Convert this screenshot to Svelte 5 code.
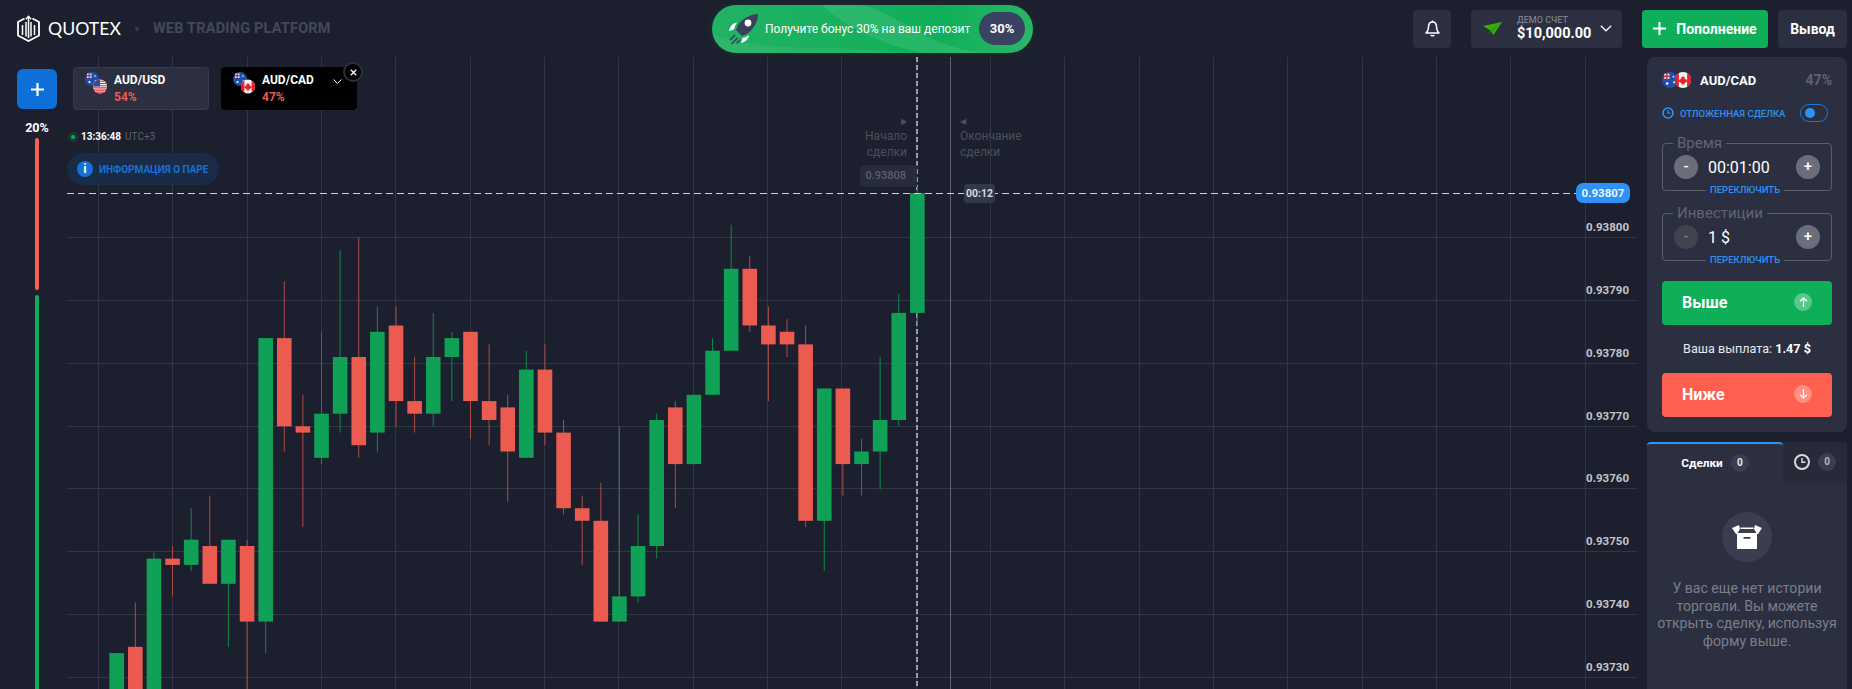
<script lang="ts">
  // [kind, high, top, bottom, low], in ticks below 0.93800 (one tick = 6.3px)
  const candles = [
    ['g', 66, 66, 80, 80], ['r', 58, 65, 80, 80], ['g', 50, 51, 80, 80], ['r', 49, 51, 52, 57],
    ['g', 43, 48, 52, 53], ['r', 41, 49, 55, 55], ['g', 48, 48, 55, 65], ['r', 48, 49, 61, 80],
    ['g', 16, 16, 61, 66], ['r', 7, 16, 30, 34], ['r', 25, 30, 31, 46], ['g', 15, 28, 35, 36],
    ['g', 2, 19, 28, 31], ['r', 0, 19, 33, 35], ['g', 11, 15, 31, 34], ['r', 11, 14, 26, 30],
    ['r', 19, 26, 28, 31], ['g', 12, 19, 28, 30], ['g', 15, 16, 19, 26], ['r', 15, 15, 26, 32],
    ['r', 17, 26, 29, 33], ['r', 25, 27, 34, 42], ['g', 18, 21, 35, 35], ['r', 17, 21, 31, 33],
    ['r', 29, 31, 43, 44], ['r', 41, 43, 45, 52], ['r', 39, 45, 61, 61], ['g', 30, 57, 61, 61],
    ['g', 44, 49, 57, 58], ['g', 28, 29, 49, 51], ['r', 26, 27, 36, 43], ['g', 25, 25, 36, 36],
    ['g', 16, 18, 25, 25], ['g', -2, 5, 18, 18], ['r', 3, 5, 14, 15], ['r', 11, 14, 17, 26],
    ['r', 13, 15, 17, 19], ['r', 14, 17, 45, 46], ['g', 24, 24, 45, 53], ['r', 24, 24, 36, 41],
    ['g', 32, 34, 36, 41], ['g', 19, 29, 34, 40], ['g', 9, 12, 29, 30], ['g', -8, -7, 12, 14]
  ];

  const tickY = (t) => 237.3 + t * 6.3;
  const candleX = (i) => 116.7 + i * 18.62;

  const gridX = Array.from({ length: 21 }, (_, i) => Math.round(98 + i * 74.33) + 0.5);
  const gridY = [237.5, 300.5, 363.5, 426.5, 488.5, 551.5, 614.5, 677.5];
  const axis = [
    ['0.93800', 226], ['0.93790', 289], ['0.93780', 352], ['0.93770', 415],
    ['0.93760', 477], ['0.93750', 540], ['0.93740', 603], ['0.93730', 666]
  ];
</script>

{#snippet flagAU(cx, cy, r)}
  <g transform="translate({cx - r} {cy - r}) scale({r / 7})">
    <circle cx="7" cy="7" r="7" fill="#1f4fa8" />
    <rect x="2" y="1.500" width="4.500" height="4.500" fill="#e8e8f0" />
    <path d="M4.200 1.500V6M2 3.700H6.500" stroke="#d8232f" stroke-width="1.300" />
    <circle cx="10" cy="4" r=".8" fill="#fff" />
    <circle cx="10.500" cy="9" r=".8" fill="#fff" />
    <circle cx="4.500" cy="10" r="1.100" fill="#fff" />
  </g>
{/snippet}

{#snippet flagUS(cx, cy, r)}
  <g transform="translate({cx - r} {cy - r}) scale({r / 7})">
    <circle cx="7" cy="7" r="7" fill="#f2f2f2" />
    <path d="M2.500 1.800h9M.9 4h12.200M.1 6.200h13.800M.2 8.400h13.600M1 10.600h12M3 12.600h8" stroke="#d8343f" stroke-width="1.100" />
    <path d="M7 0A7 7 0 0 0 0 7h7z" fill="#3a4a8c" />
  </g>
{/snippet}

{#snippet flagCA(cx, cy, r)}
  <g transform="translate({cx - r} {cy - r}) scale({r / 7})">
    <circle cx="7" cy="7" r="7" fill="#f4f4f4" />
    <path d="M3.400.9A7 7 0 0 0 3.400 13.100zM10.600.9a7 7 0 0 1 0 12.200z" fill="#e0252f" />
    <path d="M7 3.200l.9 1.600.9-.4-.4 2.200 1.100-.6.300.8 1-.1-.4 1.300.4.300-2.600 1.500.2.900H7.300v1.200h-.6V10.700H5.600l.2-.9-2.600-1.500.4-.3-.4-1.300 1 .1.300-.8 1.100.6-.4-2.200.9.4z" fill="#e0252f" />
  </g>
{/snippet}

<div class="page">
  <header class="topbar">
    <div class="brand">
      <svg class="logo" width="23" height="27" viewBox="0 0 23 27" fill="none" stroke="#fff">
        <path d="M7.500 3.500L1 7v13.500L11.500 26 22 20.500V7l-6.500-3.500" stroke-width="1.800" />
        <path d="M5.500 10v10M9 7v14.500M14 7v14.500M17.500 10v10M11.500 2v21" stroke-width="1.500" />
        <path d="M8.800 4.300l2.700-3 2.700 3" stroke-width="1.300" />
      </svg>
      <span class="wordmark">QUOTEX</span>
      <span class="brand-dot"></span>
      <span class="tagline">WEB TRADING PLATFORM</span>
    </div>

    <div class="bonus">
      <svg class="bonus-wave" viewBox="0 0 321 48" preserveAspectRatio="none">
        <path d="M150 0c40 10 60 40 120 48h-60C170 40 130 20 110 0z" fill="#fff" opacity=".09" />
        <path d="M0 30c60 20 130 8 190 18H0z" fill="#fff" opacity=".06" />
      </svg>
      <svg class="rocket" width="32" height="32" viewBox="0 0 32 32">
        <path d="M31 1C24 1 16 5 11 12l-2 5 6 6 5-2c7-5 11-13 11-20z" fill="#3a3f5e" />
        <circle cx="21" cy="10" r="3.400" fill="#fff" />
        <path d="M10 9.500C6 10 3 13 2 18l5-1.500C7.500 14 8.500 12 10 9.500zM22 22c-.5 4-3.500 7-8 8l1.500-5c2.500-.5 4.500-1.500 6.500-3z" fill="#fff" />
        <path d="M8 22l-5 5M10.500 25l-6 6M13 27l-3.500 3.500" stroke="#3a3f5e" stroke-width="1.500" />
      </svg>
      <span class="bonus-text">Получите бонус 30% на ваш депозит</span>
      <span class="bonus-badge">30%</span>
    </div>

    <div class="actions">
      <button class="square" aria-label="notifications">
        <svg width="15" height="17" viewBox="0 0 15 17" fill="none" stroke="#fff" stroke-width="1.500">
          <path d="M7.500 2C4.500 2 3.500 4.500 3.500 7c0 3-1 4.500-2.500 6h13c-1.500-1.500-2.500-3-2.500-6 0-2.500-1-5-4-5z" stroke-linejoin="round" />
          <path d="M5.800 15c.4 1 3 1 3.400 0M7.500 .6v1.400" />
        </svg>
      </button>
      <div class="account">
        <svg width="20" height="14" viewBox="0 0 20 14">
          <path d="M0 4L19 0 10.500 13 7.500 8.500z" fill="#2fb10a" />
          <path d="M7.500 8.500L19 0 5 12.500z" fill="#249008" />
        </svg>
        <div class="account-text">
          <span class="account-label">ДЕМО СЧЕТ</span>
          <span class="account-sum">$10,000.00</span>
        </div>
        <svg class="chevron" width="12" height="7" viewBox="0 0 12 7" fill="none" stroke="#fff" stroke-width="1.200"><path d="M.8.8L6 5.800 11.200.8" /></svg>
      </div>
      <button class="deposit">
        <svg width="13" height="13" viewBox="0 0 13 13" stroke="#fff" stroke-width="2"><path d="M6.500 0v13M0 6.500h13" /></svg>
        Пополнение
      </button>
      <button class="withdraw">Вывод</button>
    </div>
  </header>

  <div class="main">
    <aside class="rail">
      <button class="add" aria-label="add pair">
        <svg width="13" height="13" viewBox="0 0 13 13" stroke="#fff" stroke-width="2.200"><path d="M6.500 0v13M0 6.500h13" /></svg>
      </button>
      <span class="rail-pct">20%</span>
      <div class="rail-red"></div>
      <div class="rail-green"></div>
    </aside>

    <section class="chart">
      <svg class="plot" viewBox="67 57 1575 632" width="1575" height="632">
        {#each gridX as x}
          <line x1={x} x2={x} y1="57" y2="689" stroke="#323544" />
        {/each}
        {#each gridY as y}
          <line x1="67" x2="1637" y1={y} y2={y} stroke="#323544" />
        {/each}
        <line x1="950.5" x2="950.5" y1="57" y2="689" stroke="#62646f" />
        <line x1="917" x2="917" y1="57" y2="689" stroke="#9a9ca6" stroke-width="2" stroke-dasharray="5 3" />
        {#each candles as [kind, high, top, bottom, low], i}
          <line
            x1={candleX(i)}
            x2={candleX(i)}
            y1={tickY(high)}
            y2={tickY(low)}
            stroke={kind === 'g' ? '#0d8a4a' : '#b04c47'}
          />
          <rect
            x={candleX(i) - 7.3}
            y={tickY(top)}
            width="14.600"
            height={tickY(bottom) - tickY(top)}
            fill={kind === 'g' ? '#0fa155' : '#ec5b4f'}
          />
        {/each}
        <line x1="67" x2="1576" y1="193.500" y2="193.500" stroke="#d0d1d6" stroke-dasharray="7 4" />
      </svg>

      <div class="pairs">
        <div class="pair">
          <svg class="pair-flags" width="24" height="24" viewBox="0 0 24 24">
            {@render flagAU(8, 7, 7)}
            {@render flagUS(16, 14.500, 7)}
          </svg>
          <div class="pair-text">
            <span class="pair-name">AUD/USD</span>
            <span class="pair-pct">54%</span>
          </div>
        </div>
        <div class="pair active">
          <svg class="pair-flags" width="24" height="24" viewBox="0 0 24 24">
            {@render flagAU(8, 7, 7)}
            {@render flagCA(16, 14.500, 7)}
          </svg>
          <div class="pair-text">
            <span class="pair-name">AUD/CAD</span>
            <span class="pair-pct">47%</span>
          </div>
          <svg class="pair-chevron" width="9" height="5" viewBox="0 0 9 5" fill="none" stroke="#fff"><path d="M.5.500L4.500 4.300 8.500.5" /></svg>
          <span class="pair-close">
            <svg width="7" height="7" viewBox="0 0 7 7" stroke="#fff" stroke-width="1.300"><path d="M.8.8l5.400 5.400M6.200.8L.8 6.200" /></svg>
          </span>
        </div>
      </div>

      <div class="clock">
        <span class="clock-dot"></span>
        <span class="clock-time">13:36:48</span>
        <span class="clock-zone">UTC+3</span>
      </div>

      <div class="info">
        <span class="info-icon">i</span>
        ИНФОРМАЦИЯ О ПАРЕ
      </div>

      <div class="mark mark-start">
        <span class="mark-arrow">▶</span>
        <span>Начало<br />сделки</span>
      </div>
      <div class="mark mark-end">
        <span class="mark-arrow">◀</span>
        <span>Окончание<br />сделки</span>
      </div>
      <span class="open-price">0.93808</span>
      <span class="countdown">00:12</span>
      <span class="price-now">0.93807</span>

      {#each axis as [label, y]}
        <span class="axis-label" style="top: {y - 57 - 6.5}px">{label}</span>
      {/each}
    </section>

    <aside class="side">
      <div class="panel">
        <div class="panel-head">
          <svg width="30" height="18" viewBox="0 0 30 18">
            {@render flagAU(8, 9, 8)}
            {@render flagCA(21, 9, 8)}
          </svg>
          <span class="panel-pair">AUD/CAD</span>
          <span class="panel-pct">47%</span>
        </div>

        <div class="pending">
          <svg width="12" height="12" viewBox="0 0 12 12" fill="none" stroke="#2d92f5" stroke-width="1.600">
            <circle cx="6" cy="6" r="5" />
            <path d="M6 3v3.200h2.400" stroke-width="1.200" />
          </svg>
          <span class="pending-text">ОТЛОЖЕННАЯ СДЕЛКА</span>
          <span class="toggle"><span class="toggle-knob"></span></span>
        </div>

        <div class="field first">
          <span class="field-label">Время</span>
          <span class="step">-</span>
          <span class="field-value">00:01:00</span>
          <span class="step">+</span>
          <span class="field-switch">ПЕРЕКЛЮЧИТЬ</span>
        </div>

        <div class="field second">
          <span class="field-label">Инвестиции</span>
          <span class="step off">-</span>
          <span class="field-value">1 $</span>
          <span class="step">+</span>
          <span class="field-switch">ПЕРЕКЛЮЧИТЬ</span>
        </div>

        <button class="trade up">
          Выше
          <span class="trade-icon">
            <svg width="9" height="10" viewBox="0 0 9 10" fill="none" stroke="#fff" stroke-width="1.300"><path d="M4.500 10V1M1 4.300L4.500 1 8 4.300" /></svg>
          </span>
        </button>
        <div class="payout">Ваша выплата: <b>1.47 $</b></div>
        <button class="trade down">
          Ниже
          <span class="trade-icon">
            <svg width="9" height="10" viewBox="0 0 9 10" fill="none" stroke="#fff" stroke-width="1.300"><path d="M4.500 0v9M1 5.700L4.500 9 8 5.700" /></svg>
          </span>
        </button>
      </div>

      <div class="trades">
        <div class="tabs">
          <div class="tab current">Сделки <span class="count">0</span></div>
          <div class="tab">
            <svg width="16" height="16" viewBox="0 0 16 16" fill="none" stroke="#d8d9dd" stroke-width="2">
              <circle cx="8" cy="8" r="7" />
              <path d="M8 4v4.300h3.500" stroke-width="1.500" />
            </svg>
            <span class="count dim">0</span>
          </div>
        </div>
        <div class="empty">
          <span class="empty-icon">
            <svg width="30" height="24" viewBox="0 0 30 24" fill="#fff">
              <path d="M0 3L7 0l1 4-3 5H4zM30 3l-7-3-1 4 3 5h1zM8.500 2.500h13V4h-13z" />
              <path d="M5 8h20v16H5zM11.500 12v1.800h7V12z" fill-rule="evenodd" />
            </svg>
          </span>
          <p>У вас еще нет истории торговли. Вы можете открыть сделку, используя форму выше.</p>
        </div>
      </div>
    </aside>
  </div>
</div>

<style>
  :global(body) {
    margin: 0;
    background: #1c1f2d;
    font-family: Roboto, "Liberation Sans", sans-serif;
    color: #fff;
  }

  button {
    border: 0;
    color: #fff;
    font: inherit;
    padding: 0;
  }

  .page {
    height: 689px;
    overflow: hidden;
    display: flex;
    flex-direction: column;
  }

  .topbar {
    height: 57px;
    flex-shrink: 0;
    display: flex;
    align-items: center;
  }

  .brand {
    width: 712px;
    flex-shrink: 0;
    box-sizing: border-box;
    padding-left: 17px;
    display: flex;
    align-items: center;
  }

  .logo {
    flex-shrink: 0;
  }

  .wordmark {
    margin-left: 8px;
    font-family: Lato, Roboto, sans-serif;
    font-size: 17.700px;
  }

  .brand-dot {
    width: 4px;
    height: 4px;
    border-radius: 50%;
    background: #3a3d4b;
    margin-left: 14px;
  }

  .tagline {
    margin-left: 14px;
    font-size: 14.500px;
    font-weight: 700;
    color: #44475a;
    letter-spacing: 0.2px;
  }

  .bonus {
    position: relative;
    width: 321px;
    flex-shrink: 0;
    height: 48px;
    border-radius: 24px;
    background: linear-gradient(100deg, #23b264, #0faf59 70%, #2bb768);
    box-shadow: 0 0 8px rgba(15, 175, 89, 0.15);
    display: flex;
    align-items: center;
    overflow: hidden;
  }

  .bonus-wave {
    position: absolute;
    inset: 0;
    width: 100%;
    height: 100%;
  }

  .rocket {
    position: relative;
    flex-shrink: 0;
    margin-left: 15px;
  }

  .bonus-text {
    position: relative;
    margin-left: 6px;
    font-size: 12px;
    white-space: nowrap;
  }

  .bonus-badge {
    position: relative;
    flex-shrink: 0;
    margin-left: auto;
    margin-right: 8px;
    width: 46px;
    height: 33px;
    border-radius: 17px;
    background: #3b4160;
    display: flex;
    align-items: center;
    justify-content: center;
    font-size: 13px;
    font-weight: 700;
  }

  .actions {
    flex: 1;
    display: flex;
    justify-content: flex-end;
    align-items: center;
    padding-right: 5px;
  }

  .square,
  .account,
  .deposit,
  .withdraw {
    height: 38px;
    border-radius: 4px;
    background: #2b2f40;
    display: flex;
    align-items: center;
    justify-content: center;
  }

  .square {
    width: 38px;
    margin-right: 20px;
  }

  .account {
    width: 151px;
    margin-right: 20px;
    justify-content: flex-start;
    padding-left: 12px;
    box-sizing: border-box;
  }

  .account-text {
    margin-left: 14px;
    display: flex;
    flex-direction: column;
    line-height: 16px;
  }

  .account-label {
    font-size: 9px;
    line-height: 11px;
    font-weight: 500;
    color: #7c7f8b;
  }

  .account-sum {
    font-size: 14.500px;
    font-weight: 700;
  }

  .chevron {
    margin-left: 9px;
  }

  .deposit {
    width: 126px;
    margin-right: 10px;
    background: #0faf59;
    font-size: 14px;
    font-weight: 700;
    gap: 10px;
  }

  .withdraw {
    width: 69px;
    font-size: 14px;
    font-weight: 700;
  }

  .main {
    flex: 1;
    display: flex;
    min-height: 0;
  }

  .rail {
    width: 67px;
    flex-shrink: 0;
    display: flex;
    flex-direction: column;
    align-items: center;
    padding: 12px 0 0 7px;
    box-sizing: border-box;
  }

  .add {
    width: 40px;
    height: 40px;
    border-radius: 6px;
    background: #0f6fd8;
    display: flex;
    align-items: center;
    justify-content: center;
  }

  .rail-pct {
    margin-top: 12px;
    font-size: 12.500px;
    line-height: 14px;
    font-weight: 700;
  }

  .rail-red {
    width: 4px;
    height: 152px;
    margin-top: 3px;
    border-radius: 2px;
    background: #ff5f4e;
  }

  .rail-green {
    width: 4px;
    flex: 1;
    margin-top: 5px;
    border-radius: 2px 2px 0 0;
    background: #0faf59;
  }

  .chart {
    position: relative;
    flex: 1;
    min-width: 0;
  }

  .plot {
    position: absolute;
    inset: 0;
  }

  .pairs {
    position: absolute;
    left: 6px;
    top: 10px;
    display: flex;
    gap: 12px;
  }

  .pair {
    position: relative;
    width: 136px;
    height: 43px;
    box-sizing: border-box;
    border: 1px solid #363a4c;
    border-radius: 4px;
    background: #2b2f40;
    display: flex;
    align-items: flex-start;
  }

  .pair.active {
    background: #000;
    border-color: #000;
  }

  .pair-flags {
    margin: 4px 0 0 10px;
  }

  .pair-text {
    margin: 4px 0 0 6px;
    display: flex;
    flex-direction: column;
    font-size: 12px;
    font-weight: 700;
    line-height: 17px;
  }

  .pair-pct {
    color: #ee5b4e;
  }

  .pair-chevron {
    position: absolute;
    left: 111px;
    top: 11px;
  }

  .pair-close {
    position: absolute;
    right: -7px;
    top: -6px;
    width: 16px;
    height: 16px;
    border-radius: 50%;
    background: #000;
    border: 2px solid #2b2f40;
    display: flex;
    align-items: center;
    justify-content: center;
  }

  .clock {
    position: absolute;
    left: 1px;
    top: 73px;
    display: flex;
    align-items: center;
    font-size: 10px;
    line-height: 14px;
  }

  .clock-dot {
    width: 4px;
    height: 4px;
    border-radius: 50%;
    background: #0faf59;
    border: 3px solid #1c3a33;
  }

  .clock-time {
    margin-left: 3px;
    font-weight: 700;
  }

  .clock-zone {
    margin-left: 4px;
    color: #5c5f6c;
  }

  .info {
    position: absolute;
    left: 0;
    top: 96px;
    width: 152px;
    height: 32px;
    box-sizing: border-box;
    padding-left: 10px;
    border-radius: 16px;
    background: #1a2b47;
    display: flex;
    align-items: center;
    gap: 6px;
    font-size: 10px;
    font-weight: 700;
    color: #1670d6;
  }

  .info-icon {
    width: 16px;
    height: 16px;
    border-radius: 50%;
    background: #1670d6;
    color: #fff;
    font-size: 13px;
    line-height: 16px;
    text-align: center;
  }

  .mark {
    position: absolute;
    top: 58px;
    display: flex;
    flex-direction: column;
    font-size: 12px;
    line-height: 15.500px;
    color: #4c4f5c;
  }

  .mark-start {
    right: 735px;
    text-align: right;
  }

  .mark-end {
    left: 893px;
  }

  .mark-arrow {
    font-size: 8px;
    line-height: 13px;
    margin-bottom: 1px;
  }

  .open-price {
    position: absolute;
    left: 793px;
    top: 108px;
    width: 57px;
    height: 22px;
    box-sizing: border-box;
    padding-right: 11px;
    border-radius: 5px 0 0 5px;
    background: #282b39;
    color: #5c5f6c;
    font-size: 11px;
    font-weight: 500;
    line-height: 22px;
    text-align: right;
  }

  .countdown {
    position: absolute;
    left: 897px;
    top: 127px;
    width: 31px;
    height: 19px;
    border-radius: 3px;
    background: #33374a;
    color: #d8d9dd;
    font-size: 10.500px;
    font-weight: 700;
    line-height: 20px;
    text-align: center;
  }

  .price-now {
    position: absolute;
    left: 1509px;
    top: 126px;
    width: 54px;
    height: 20px;
    border-radius: 7px;
    background: #2d92f5;
    color: #e8f3ff;
    font-size: 11.500px;
    font-weight: 700;
    line-height: 21px;
    text-align: center;
  }

  .axis-label {
    position: absolute;
    right: 13px;
    color: #c5c6cb;
    font-size: 11.500px;
    font-weight: 700;
    line-height: 14px;
  }

  .side {
    width: 210px;
    flex-shrink: 0;
    box-sizing: border-box;
    padding: 0 5px;
    display: flex;
    flex-direction: column;
    gap: 10px;
  }

  .panel {
    box-sizing: border-box;
    height: 375px;
    flex-shrink: 0;
    padding: 14px 15px 15px;
    border-radius: 8px;
    background: #2b2f40;
    display: flex;
    flex-direction: column;
  }

  .panel-head {
    height: 18px;
    display: flex;
    align-items: center;
    gap: 8px;
  }

  .panel-pair {
    font-size: 13px;
    font-weight: 700;
  }

  .panel-pct {
    margin-left: auto;
    color: #5f626e;
    font-size: 14px;
    font-weight: 700;
  }

  .pending {
    height: 18px;
    margin-top: 15px;
    display: flex;
    align-items: center;
    gap: 6px;
  }

  .pending-text {
    font-size: 9.500px;
    font-weight: 500;
    color: #2d92f5;
    white-space: nowrap;
  }

  .toggle {
    margin-left: auto;
    margin-right: 4px;
    width: 28px;
    height: 18px;
    box-sizing: border-box;
    border: 1px solid #1f78d4;
    border-radius: 9px;
    display: flex;
    align-items: center;
    padding-left: 4px;
  }

  .toggle-knob {
    width: 10px;
    height: 10px;
    border-radius: 50%;
    background: #2d92f5;
  }

  .field {
    position: relative;
    height: 48px;
    box-sizing: border-box;
    border: 1px solid #5a5d6a;
    border-radius: 4px;
    padding: 0 11px;
    display: flex;
    align-items: center;
  }

  .first {
    margin-top: 21px;
  }

  .second {
    margin-top: 22px;
  }

  .field-label {
    position: absolute;
    left: 10px;
    top: -10px;
    padding: 0 4px;
    background: #2b2f40;
    color: #62656f;
    font-size: 15px;
    line-height: 18px;
  }

  .field-switch {
    position: absolute;
    left: 43px;
    bottom: -6px;
    padding: 0 4px;
    background: #2b2f40;
    color: #2d92f5;
    font-size: 9.500px;
    font-weight: 500;
    line-height: 12px;
    white-space: nowrap;
  }

  .step {
    width: 24px;
    height: 24px;
    border-radius: 50%;
    background: #6b6e79;
    color: #fff;
    font-size: 15px;
    font-weight: 500;
    line-height: 23px;
    text-align: center;
  }

  .step.off {
    background: #41444f;
    color: #7b7e88;
  }

  .field-value {
    flex: 1;
    margin-left: 10px;
    font-size: 16px;
  }

  .trade {
    height: 44px;
    border-radius: 4px;
    display: flex;
    align-items: center;
    justify-content: space-between;
    box-sizing: border-box;
    padding: 0 20px 2px 20px;
    font-size: 16px;
    font-weight: 700;
    flex-shrink: 0;
  }

  .up {
    margin-top: 20px;
    background: #0faf59;
  }

  .down {
    background: #ff5f4e;
  }

  .trade-icon {
    width: 18px;
    height: 18px;
    border-radius: 50%;
    background: rgba(255, 255, 255, 0.3);
    display: flex;
    align-items: center;
    justify-content: center;
  }

  .payout {
    height: 48px;
    line-height: 48px;
    text-align: center;
    font-size: 12.600px;
    color: #e8e9ec;
  }

  .payout b {
    color: #fff;
  }

  .trades {
    flex: 1;
    border-radius: 4px 4px 0 0;
    background: #2b2f40;
  }

  .tabs {
    display: flex;
    height: 41px;
    background: #282a3a;
    border-radius: 4px 4px 0 0;
  }

  .tab {
    flex: 1;
    display: flex;
    align-items: center;
    justify-content: center;
    gap: 8px;
    padding-bottom: 1px;
  }

  .tab.current {
    flex: 0 0 136px;
    box-sizing: border-box;
    border-top: 2px solid #2d92f5;
    border-radius: 4px 4px 0 0;
    background: #2b2f40;
    font-size: 11.800px;
    font-weight: 700;
    padding-bottom: 2px;
  }

  .count {
    width: 18px;
    height: 18px;
    border-radius: 50%;
    background: #3b3e4e;
    font-size: 10px;
    font-weight: 700;
    line-height: 18px;
    text-align: center;
    color: #e8e9ec;
  }

  .count.dim {
    color: #b4b6bd;
  }

  .empty {
    display: flex;
    flex-direction: column;
    align-items: center;
    padding: 29px 8px 0;
  }

  .empty-icon {
    width: 50px;
    height: 50px;
    border-radius: 50%;
    background: #3b3e4e;
    display: flex;
    align-items: center;
    justify-content: center;
  }

  .empty p {
    margin: 18px 0 0;
    font-size: 14.100px;
    line-height: 17.700px;
    text-align: center;
    color: #7b7e8a;
  }
</style>
